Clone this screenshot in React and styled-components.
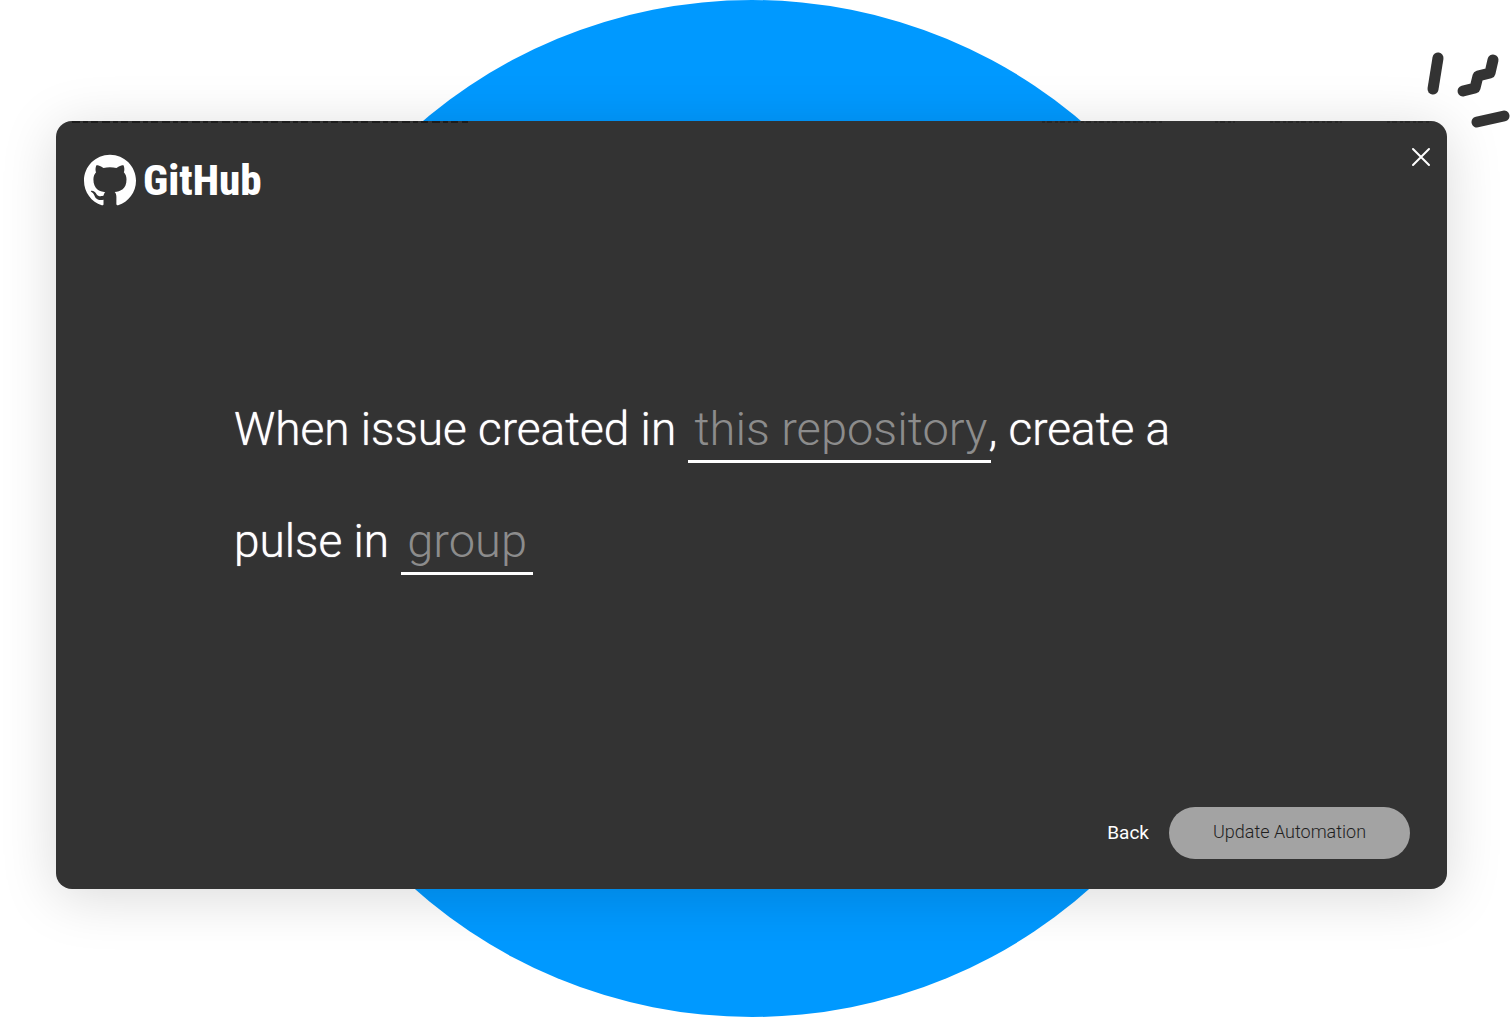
import React from "react";
import styled, { createGlobalStyle } from "styled-components";

const GlobalStyle = createGlobalStyle`
  *, *::before, *::after { box-sizing: border-box; }
  body { margin: 0; background: #ffffff; font-family: Roboto, "Liberation Sans", sans-serif; }
`;

const Stage = styled.div`
  position: relative;
  display: flex;
  min-height: 100vh;
  padding: 121px 63px 128px 56px;
  overflow: hidden;
`;

const Disc = styled.div`
  position: absolute;
  top: 0;
  bottom: 0;
  left: 50%;
  height: 100%;
  aspect-ratio: 1;
  transform: translateX(-50%);
  margin-left: -3px;
  border-radius: 50%;
  background: #0099ff;
`;

const Sparks = styled.svg`
  position: absolute;
  top: 48px;
  right: 0;
  width: 90px;
  height: 84px;
  fill: none;
  stroke: #333333;
  stroke-width: 11;
  stroke-linecap: round;
  stroke-linejoin: round;
`;

const Card = styled.form`
  position: relative;
  display: flex;
  flex: 1;
  flex-direction: column;
  border-radius: 16px;
  background: #333333;
  color: #ffffff;
  box-shadow: 0 8px 56px rgba(0, 0, 0, 0.15);
`;

const EdgeMarks = styled.svg`
  position: absolute;
  top: 0;
  left: 0;
  width: 100%;
  height: 2px;
  stroke: #1c1c1c;
  stroke-width: 2;
`;

const Header = styled.header`
  display: flex;
  align-items: flex-start;
  justify-content: space-between;
  padding: 32px 12px 0 28px;
`;

const Brand = styled.div`
  display: flex;
  align-items: center;
  gap: 7px;
  height: 54px;
`;

const Mark = styled.svg`
  width: 52px;
  height: 54px;
  fill: #ffffff;
`;

const Wordmark = styled.span`
  font-family: "Roboto Condensed", Roboto, sans-serif;
  font-size: 43px;
  font-weight: 800;
  line-height: 54px;
`;

const CloseButton = styled.button`
  display: flex;
  align-items: center;
  justify-content: center;
  width: 28px;
  height: 28px;
  margin-top: -10px;
  padding: 0;
  border: 0;
  background: none;
  color: inherit;
  cursor: pointer;

  svg {
    width: 20px;
    height: 20px;
    stroke: currentColor;
    stroke-width: 2;
    stroke-linecap: round;
  }
`;

const Recipe = styled.main`
  display: flex;
  flex: 1;
  align-items: center;
  padding: 0 178px 44px;
`;

const Sentence = styled.p`
  max-width: 980px;
  margin: 0;
  font-size: 46px;
  font-weight: 300;
  line-height: 112px;
  text-shadow: 0 0 1px #ffffff;
`;

const Blank = styled.input`
  width: ${(p) => p.$width}px;
  height: 62px;
  margin: 0 -3px 0 1px;
  padding: 0 0 3px 6px;
  border: 0;
  border-bottom: 3px solid #ffffff;
  border-radius: 0;
  outline: none;
  background: none;
  color: #ffffff;
  font: inherit;
  font-size: 47px;
  line-height: 56px;

  &::placeholder {
    color: #8c8c8c;
    opacity: 1;
  }
`;

const Footer = styled.footer`
  display: flex;
  align-items: center;
  justify-content: flex-end;
  gap: 20px;
  padding: 0 37px 30px;
`;

const BackButton = styled.button`
  padding: 0;
  border: 0;
  background: none;
  color: #ffffff;
  font: 400 19px/24px Roboto, "Liberation Sans", sans-serif;
  cursor: pointer;
`;

const UpdateButton = styled.button`
  min-width: 241px;
  height: 52px;
  padding: 0 40px 2px;
  border: 0;
  border-radius: 26px;
  background: #a3a3a3;
  color: #1f1f1f;
  font: 300 18px/24px Roboto, "Liberation Sans", sans-serif;
  cursor: pointer;
`;

export default function App() {
  return (
    <>
      <GlobalStyle />
      <Stage>
        <Disc />
        <Card onSubmit={(e) => e.preventDefault()}>
          <EdgeMarks aria-hidden="true">
            <path d="M16 1H412" strokeDasharray="8 3 5 3 7 4" />
            <path d="M986 1H1108M1159 1H1179M1214 1H1286M1331 1H1375" strokeDasharray="3 2 5 3" strokeWidth="1" />
          </EdgeMarks>
          <Header>
            <Brand>
              <Mark viewBox="0 0 24 24" aria-hidden="true">
                <path d="M12 .297c-6.63 0-12 5.373-12 12 0 5.303 3.438 9.8 8.205 11.385.6.113.82-.258.82-.577 0-.285-.01-1.04-.015-2.04-3.338.724-4.042-1.61-4.042-1.61C4.422 18.07 3.633 17.7 3.633 17.7c-1.087-.744.084-.729.084-.729 1.205.084 1.838 1.236 1.838 1.236 1.07 1.835 2.809 1.305 3.495.998.108-.776.417-1.305.76-1.605-2.665-.3-5.466-1.332-5.466-5.93 0-1.31.465-2.38 1.235-3.22-.135-.303-.54-1.523.105-3.176 0 0 1.005-.322 3.3 1.23.96-.267 1.98-.399 3-.405 1.02.006 2.04.138 3 .405 2.28-1.552 3.285-1.23 3.285-1.23.645 1.653.24 2.873.12 3.176.765.84 1.23 1.91 1.23 3.22 0 4.61-2.805 5.625-5.475 5.92.42.36.81 1.096.81 2.22 0 1.606-.015 2.896-.015 3.286 0 .315.21.69.825.57C20.565 22.092 24 17.592 24 12.297c0-6.627-5.373-12-12-12" />
              </Mark>
              <Wordmark>GitHub</Wordmark>
            </Brand>
            <CloseButton type="button" aria-label="Close">
              <svg viewBox="0 0 20 20" aria-hidden="true">
                <path d="M2 2L18 18M18 2L2 18" />
              </svg>
            </CloseButton>
          </Header>
          <Recipe>
            <Sentence>
              {"When issue created in "}
              <Blank $width={303} type="text" aria-label="Repository" placeholder="this repository" />
              {", create a "}
              {"pulse in "}
              <Blank $width={132} type="text" aria-label="Group" placeholder="group" />
            </Sentence>
          </Recipe>
          <Footer>
            <BackButton type="button">Back</BackButton>
            <UpdateButton type="submit">Update Automation</UpdateButton>
          </Footer>
        </Card>
        <Sparks viewBox="0 0 90 84" aria-hidden="true">
          <path d="M18 10L13 41" />
          <path d="M73 12L70 25L58 28L55 40L43 43" />
          <path d="M57 74L84 68" />
        </Sparks>
      </Stage>
    </>
  );
}
